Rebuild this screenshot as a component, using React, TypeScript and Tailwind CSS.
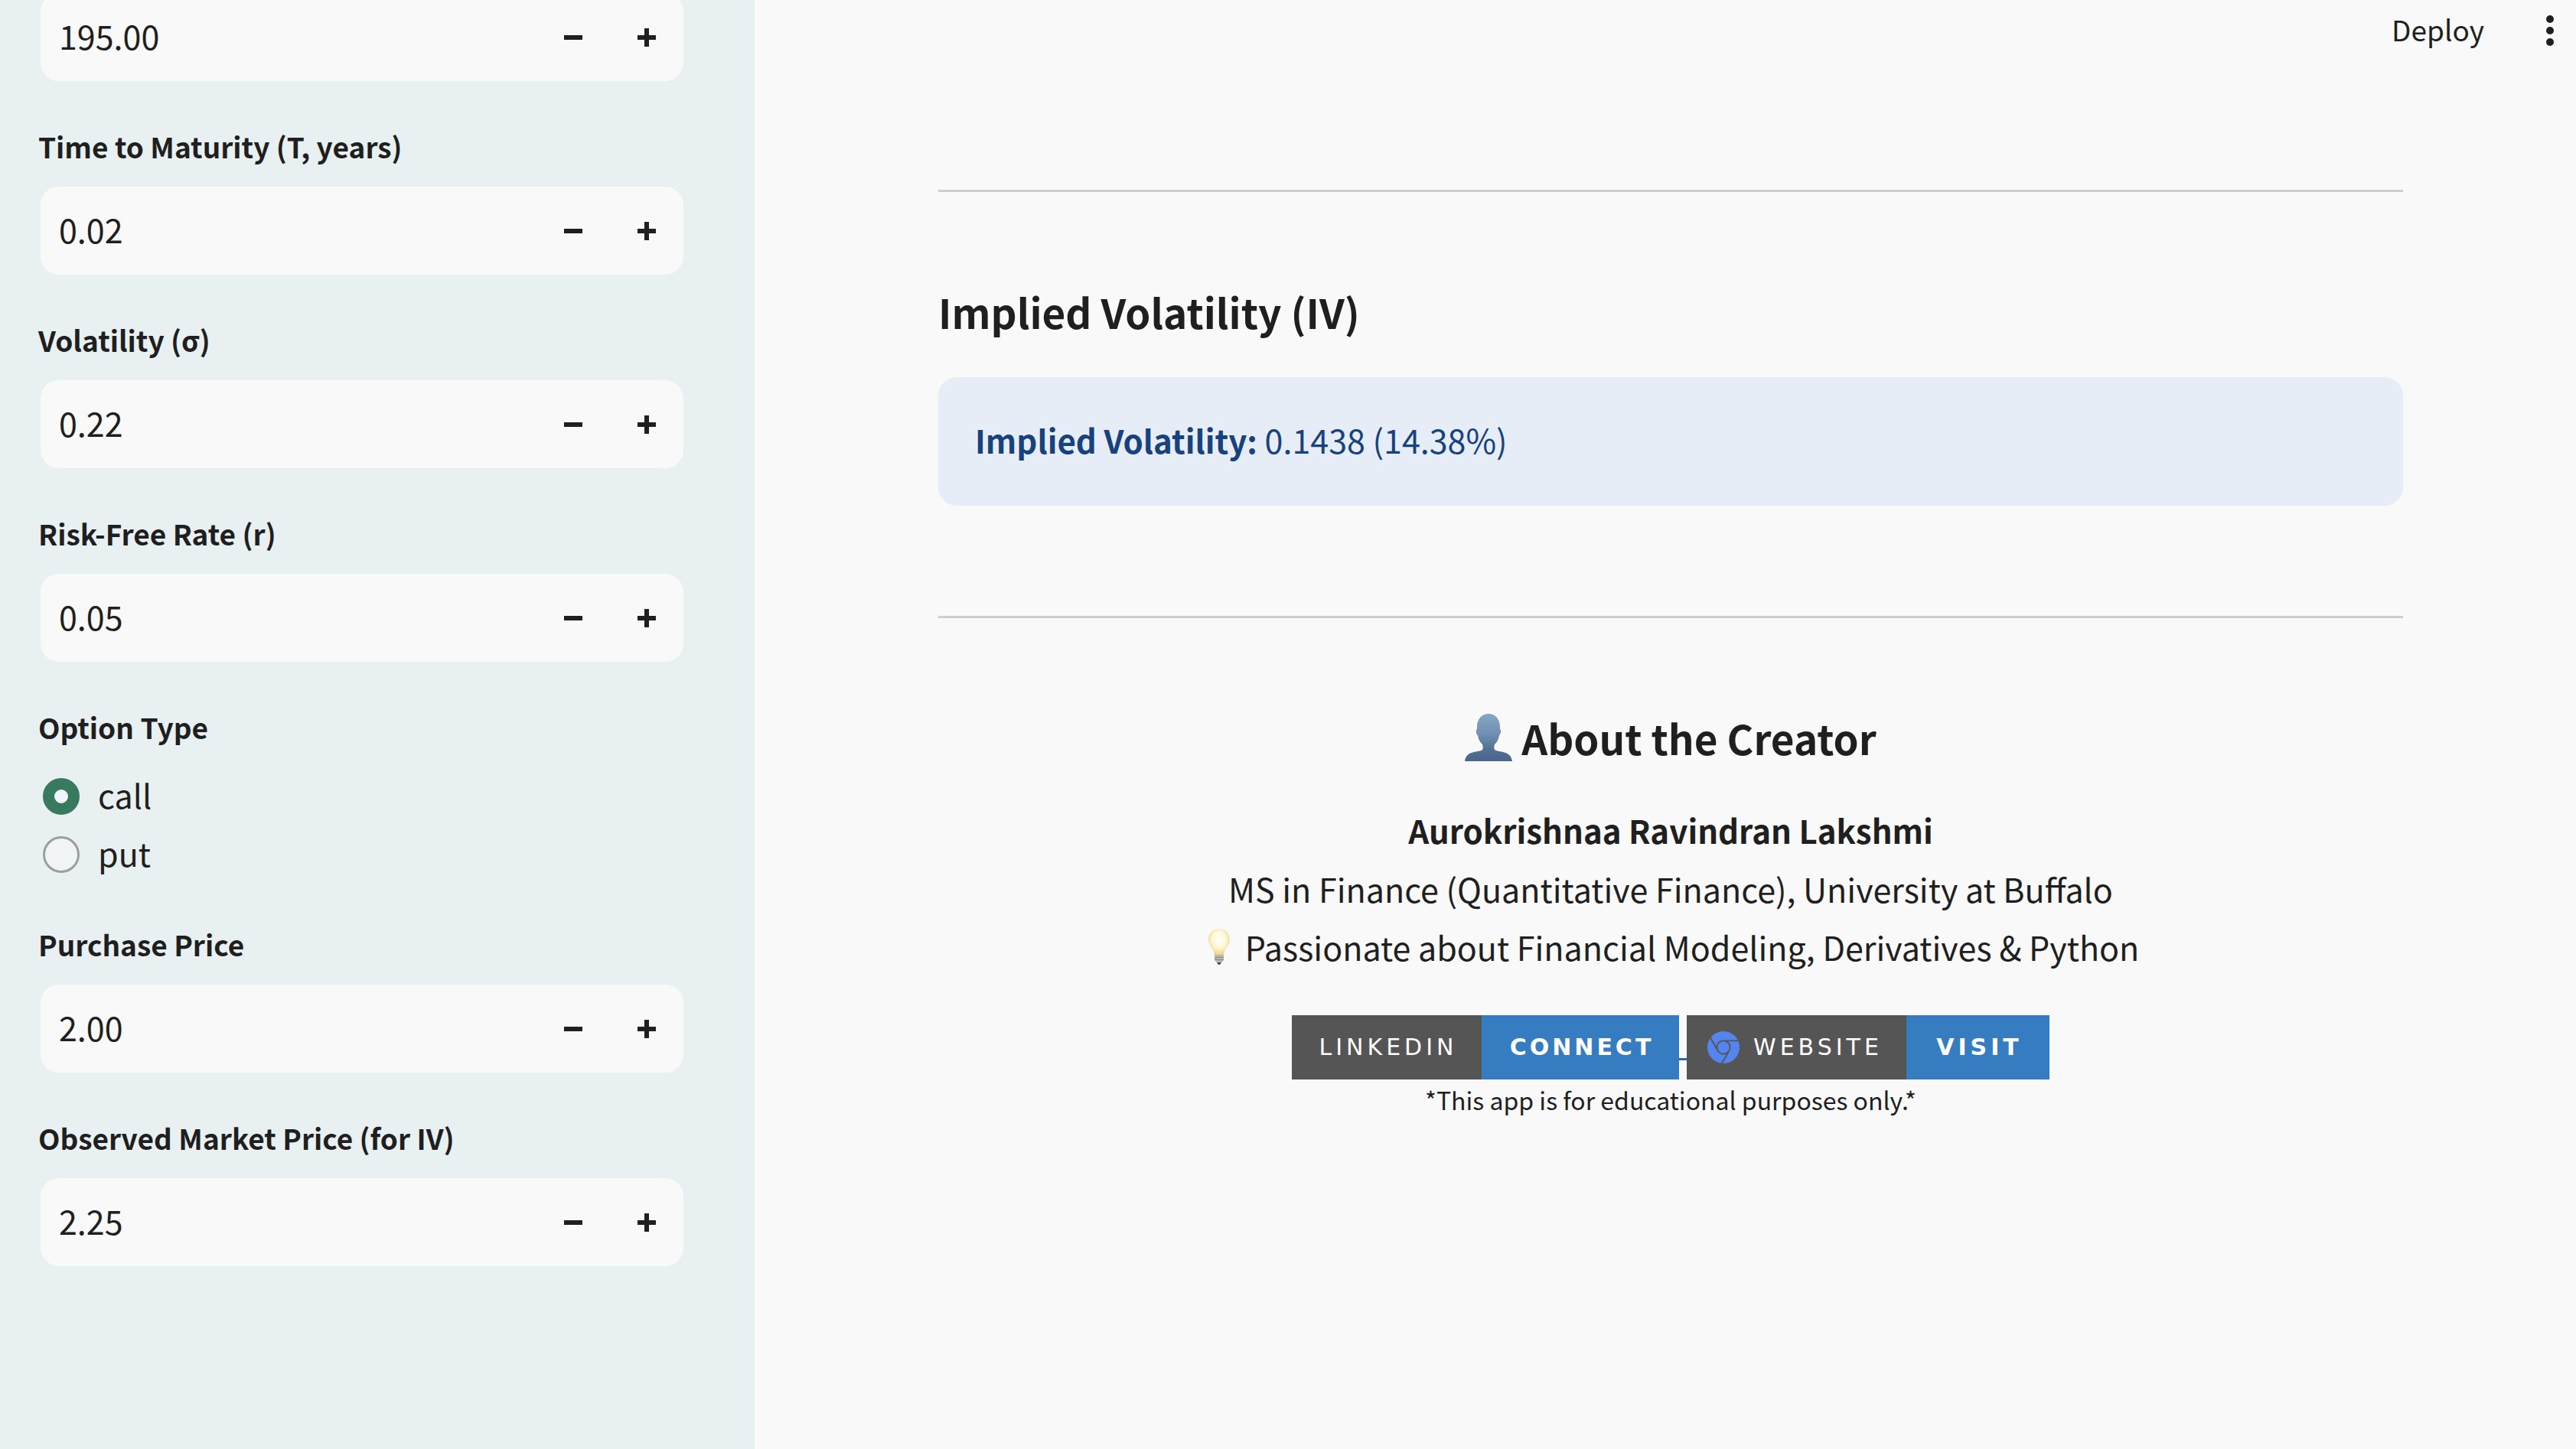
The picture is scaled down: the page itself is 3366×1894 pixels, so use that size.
import React from "react";
import { SiGooglechrome } from "react-icons/si";

const FONT = "font-['Noto_Sans_CJK_SC','Noto_Sans',sans-serif]";

function Stepper({ id, name, value }: { id: string; name: string; value: string }) {
  return (
    <div className="mx-[3px] flex h-[115px] items-center overflow-hidden rounded-3xl bg-[#f9f9f9]">
      <input
        id={id}
        type="text"
        aria-label={name}
        defaultValue={value}
        className="min-w-0 flex-1 bg-transparent px-6 pb-1.5 text-[43px] leading-[64px] outline-none"
      />
      <button type="button" aria-label={`Decrease ${name}`} className="flex h-full w-24 items-center justify-center">
        <svg viewBox="0 0 24 24" className="h-6 w-6" fill="#1f1f1f"><path d="M0 9h24v6H0z" /></svg>
      </button>
      <button type="button" aria-label={`Increase ${name}`} className="flex h-full w-24 items-center justify-center">
        <svg viewBox="0 0 24 24" className="h-6 w-6" fill="#1f1f1f"><path d="M0 9h9V0h6v9h9v6h-9v9H9v-9H0z" /></svg>
      </button>
    </div>
  );
}

function NumberField({ id, label, value }: { id: string; label: string; value: string }) {
  return (
    <div className="flex flex-col gap-[22px]">
      <label htmlFor={id} className="text-[37px] leading-[62px] font-bold">{label}</label>
      <Stepper id={id} name={label} value={value} />
    </div>
  );
}

function Radio({ label, checked }: { label: string; checked?: boolean }) {
  return (
    <label className="flex h-[76px] items-center gap-6 pl-[6px] text-[43px] leading-[64px]">
      <input
        type="radio"
        name="option-type"
        defaultChecked={checked}
        className="h-12 w-12 appearance-none rounded-full border-[3px] border-[#9b9d9e] bg-[#f0f4f7] checked:border-[15px] checked:border-[#387a5f] checked:bg-[#f0f4f7]"
      />
      <span className="pb-1.5">{label}</span>
    </label>
  );
}

function Bust() {
  return (
    <svg viewBox="0 0 62 62" className="mr-3 h-[62px] w-[62px]" aria-hidden="true">
      <defs>
        <linearGradient id="bust" x1="0" y1="0" x2="0" y2="1">
          <stop offset="0" stopColor="#86a7c6" />
          <stop offset=".4" stopColor="#7391b3" />
          <stop offset=".75" stopColor="#526f95" />
          <stop offset="1" stopColor="#4c668a" />
        </linearGradient>
      </defs>
      <path
        fill="url(#bust)"
        d="M31 0C22 0 16 7 16 17v3c-2 1-1 7 1 8 1 6 3 9 6 12 1 3 1 5 0 7-5 4-21 0-23 15h62c-2-15-18-11-23-15-1-2-1-4 0-7 3-3 5-6 6-12 2-1 3-7 1-8v-3C46 7 40 0 31 0z"
      />
    </svg>
  );
}

function Bulb() {
  return (
    <svg viewBox="0 0 28 47" className="mr-5 ml-2 h-[47px] w-7" aria-hidden="true">
      <defs>
        <radialGradient id="glow" cx=".5" cy=".42" r=".58">
          <stop offset="0" stopColor="#fffefa" />
          <stop offset=".55" stopColor="#fdf8d9" />
          <stop offset="1" stopColor="#ecd384" />
        </radialGradient>
      </defs>
      <path fill="url(#glow)" d="M14 0C6 0 0 6 0 14c0 8 7 11 8 20h12c1-9 8-12 8-20C28 6 22 0 14 0z" />
      <path fill="#b9b6ae" d="M8 34h12v7l-3 3h-6l-3-3z" />
      <path fill="#8f8c86" d="M8 37h12v1H8zm0 3h12v1H8z" />
      <path fill="#4f4d4a" d="M11 44h6l-2 3h-2z" />
    </svg>
  );
}

export default function App() {
  return (
    <div className={`flex min-h-screen overflow-hidden bg-[#f9f9f9] text-[#1f1f1f] ${FONT}`}>
      <aside className="w-[986px] shrink-0 bg-[#e8f0f2] pr-[90px] pl-[50px]">
        <div className="-mt-[9px] flex flex-col gap-[54px]">
          <Stepper id="strike" name="Strike Price" value="195.00" />
          <NumberField id="maturity" label="Time to Maturity (T, years)" value="0.02" />
          <NumberField id="volatility" label="Volatility (σ)" value="0.22" />
          <NumberField id="rate" label="Risk-Free Rate (r)" value="0.05" />
          <fieldset className="-mb-1.5">
            <legend className="mb-[22px] text-[37px] leading-[62px] font-bold">Option Type</legend>
            <Radio label="call" checked />
            <Radio label="put" />
          </fieldset>
          <NumberField id="purchase" label="Purchase Price" value="2.00" />
          <NumberField id="market" label="Observed Market Price (for IV)" value="2.25" />
        </div>
      </aside>
      <div className="min-w-0 flex-1">
        <header className="flex h-20 items-center justify-end gap-[76px] pr-6">
          <button type="button" className="pb-1 text-[37px] leading-[60px]">Deploy</button>
          <button type="button" aria-label="Main menu">
            <svg viewBox="0 0 20 40" className="h-10 w-5" fill="#1f1f1f">
              <circle cx="10" cy="5" r="5" />
              <circle cx="10" cy="20" r="5" />
              <circle cx="10" cy="35" r="5" />
            </svg>
          </button>
        </header>
        <main className="pt-[168px] pr-[226px] pl-[240px]">
          <hr className="border-t-[3px] border-[#cecece]" />
          <h3 className="mt-[114px] text-[53px] leading-[84px] font-bold">Implied Volatility (IV)</h3>
          <div className="mt-11 flex h-[168px] items-center rounded-3xl bg-[#e6edf7] px-12 pb-1.5 text-[43px] leading-[72px] text-[#17427d]">
            <p><strong className="text-[42px] font-bold">Implied Volatility:</strong> 0.1438 (14.38%)</p>
          </div>
          <hr className="mt-36 border-t-[3px] border-[#cecece]" />
          <section className="mt-[114px] flex flex-col items-center">
            <h3 className="flex items-center text-[53px] leading-[84px] font-bold">
              <Bust />
              About the Creator
            </h3>
            <p className="mt-10 text-center text-[43px] leading-[76px]">
              <strong className="text-[42px] font-bold">Aurokrishnaa Ravindran Lakshmi</strong><br />
              MS in Finance (Quantitative Finance), University at Buffalo
            </p>
            <p className="flex items-center text-[43px] leading-[76px]">
              <Bulb />
              Passionate about Financial Modeling, Derivatives &amp; Python
            </p>
            <div className="mt-[52px] flex h-[84px] font-['Verdana','DejaVu_Sans',sans-serif] text-[30px] leading-[84px] tracking-[4px] text-white">
              <a href="#linkedin" className="flex">
                <span className="w-[248px] bg-[#555555] pl-1 text-center tracking-[5px]">LINKEDIN</span>
                <span className="w-[258px] bg-[#367cc0] pl-1 text-center font-bold">CONNECT</span>
                <span className="mt-14 h-[3px] w-[10px] bg-[#2a66c4]" />
              </a>
              <a href="#website" className="flex">
                <span className="flex w-[287px] items-center gap-[18px] bg-[#555555] pl-[27px] tracking-[5px]">
                  <SiGooglechrome className="h-[42px] w-[42px] text-[#5485ee]" />
                  WEBSITE
                </span>
                <span className="w-[187px] bg-[#367cc0] pl-1 text-center font-bold tracking-[5px]">VISIT</span>
              </a>
            </div>
            <p className="text-[32px] leading-[52px]">*This app is for educational purposes only.*</p>
          </section>
        </main>
      </div>
    </div>
  );
}
